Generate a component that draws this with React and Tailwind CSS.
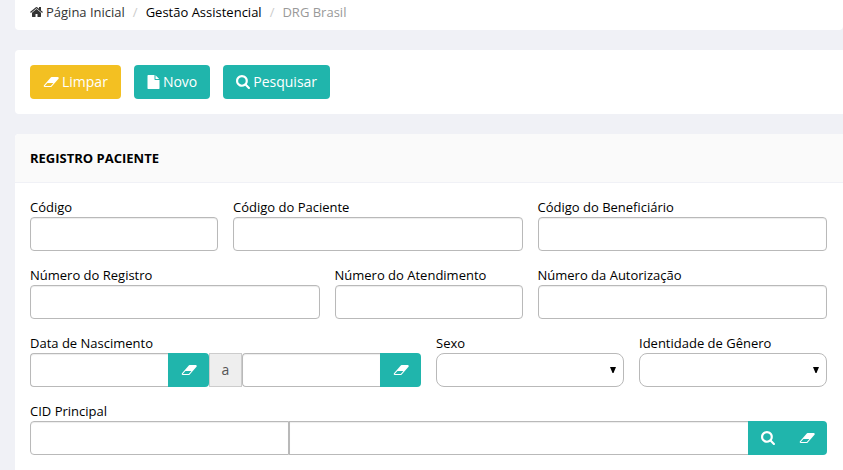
import React from 'react';
import clsx from 'clsx';

const ICONS = {
  home: {
    viewBox: '64 0 1664 1792',
    path: 'M1472 992v480q0 26-19 45t-45 19h-384v-384h-256v384h-384q-26 0-45-19t-19-45v-480q0-1 .5-3t.5-3l575-474 575 474q1 2 1 6zm223-69l-62 74q-8 9-21 11h-3q-13 0-21-7l-692-577-692 577q-12 8-24 7-13-2-21-11l-62-74q-8-10-7-23.5t11-21.5l719-599q32-26 76-26t76 26l244 204v-195q0-14 9-23t23-9h192q14 0 23 9t9 23v408l219 182q10 8 11 21.5t-7 23.5z',
  },
  eraser: {
    viewBox: '0 0 1984 1792',
    path: 'M960 1408l336-384h-768l-336 384h768zm1013-1077q15 34 9.5 71.5t-30.5 65.5l-896 1024q-38 44-96 44h-768q-38 0-69.5-20.5t-47.5-54.5q-15-34-9.5-71.5t30.5-65.5l896-1024q38-44 96-44h768q38 0 69.5 20.5t47.5 54.5z',
  },
  file: {
    viewBox: '128 0 1536 1792',
    path: 'M1152 512v-472q22 14 36 28l408 408q14 14 28 36h-472zm-128 32q0 40 28 68t68 28h544v1056q0 40-28 68t-68 28h-1344q-40 0-68-28t-28-68v-1600q0-40 28-68t68-28h800v544z',
  },
  search: {
    viewBox: '64 128 1664 1664',
    path: 'M1216 832q0-185-131.5-316.5t-316.5-131.5-316.5 131.5-131.5 316.5 131.5 316.5 316.5 131.5 316.5-131.5 131.5-316.5zm512 832q0 52-38 90t-90 38q-54 0-90-38l-343-342q-179 124-399 124-143 0-273.5-55.5t-225-150-150-225-55.5-273.5 55.5-273.5 150-225 225-150 273.5-55.5 273.5 55.5 225 150 150 225 55.5 273.5q0 220-124 399l343 343q37 37 37 90z',
  },
};

const Icon = ({ name, className }) => (
  <svg viewBox={ICONS[name].viewBox} fill="currentColor" aria-hidden="true" className={clsx('shrink-0', className)}>
    <path d={ICONS[name].path} />
  </svg>
);

const ToolbarButton = ({ icon, iconClass, color, children }) => (
  <button type="button" className={clsx('flex h-[34px] items-center gap-[3px] rounded px-[13px] text-sm text-white', color)}>
    <Icon name={icon} className={iconClass} />
    {children}
  </button>
);

const IconButton = ({ icon, label, className }) => (
  <button
    type="button"
    aria-label={label}
    className={clsx('flex h-[34px] shrink-0 items-center justify-center bg-[#20b5ac] text-white', className)}
  >
    <Icon name={icon} className={icon === 'eraser' ? 'h-[14px] w-4' : 'size-[14px]'} />
  </button>
);

const inputClass =
  'h-[34px] min-w-0 border border-[#b9b9b9] bg-white px-3 text-sm shadow-[inset_0_1px_1px_rgba(0,0,0,0.075)] outline-none';

const Field = ({ id, label, span, children }) => (
  <div className={span}>
    <label htmlFor={id} className="block h-5 text-[13px] leading-5">
      {label}
    </label>
    {children || <input id={id} type="text" className={clsx(inputClass, 'w-full rounded')} />}
  </div>
);

const SelectField = ({ id, label, span }) => (
  <Field id={id} label={label} span={span}>
    <div className="relative">
      <select
        id={id}
        className="block h-[34px] w-full appearance-none rounded-lg border border-[#b9b9b9] bg-white px-3 text-sm outline-none"
      >
        <option value=""></option>
      </select>
      <svg viewBox="0 0 6 6" className="pointer-events-none absolute top-[14px] right-2 size-[6px]" aria-hidden="true">
        <path d="M0 0h6L3.5 6h-1z" />
      </svg>
    </div>
  </Field>
);

const App = () => {
  return (
    <div className="flex min-h-screen flex-col gap-5 bg-[#f0f1f6] pl-[15px] font-['Open_Sans',sans-serif] text-black">
      <nav aria-label="breadcrumb" className="rounded-b bg-white px-[15px] pt-[2px] pb-2">
        <ol className="flex items-center text-[13px] leading-5">
          <li>
            <a href="#inicio" className="flex items-center gap-[3px] text-[#333]">
              <Icon name="home" className="h-[14px] w-[13px]" />
              Página Inicial
            </a>
          </li>
          <li className="px-2 text-[#ccc]" aria-hidden="true">/</li>
          <li>
            <a href="#gestao">Gestão Assistencial</a>
          </li>
          <li className="px-2 text-[#ccc]" aria-hidden="true">/</li>
          <li className="text-[#999]">DRG Brasil</li>
        </ol>
      </nav>

      <div className="flex gap-[13px] rounded-l bg-white p-[15px]">
        <ToolbarButton icon="eraser" iconClass="h-[14px] w-4" color="bg-[#f3c022]">Limpar</ToolbarButton>
        <ToolbarButton icon="file" iconClass="h-[14px] w-[13px]" color="bg-[#20b5ac]">Novo</ToolbarButton>
        <ToolbarButton icon="search" iconClass="size-[14px]" color="bg-[#20b5ac]">Pesquisar</ToolbarButton>
      </div>

      <form className="flex-1 rounded-tl bg-white pb-3">
        <h2 className="rounded-tl border-b border-[#f0f1f6] bg-[#fafafa] px-[15px] py-[14px] text-[13px] leading-5 font-bold">
          REGISTRO PACIENTE
        </h2>

        <div className="grid grid-cols-8 gap-x-[15px] gap-y-[14px] pt-[14px] pr-4 pl-[15px]">
          <Field id="codigo" label="Código" span="col-span-2" />
          <Field id="codigo-paciente" label="Código do Paciente" span="col-span-3" />
          <Field id="codigo-beneficiario" label="Código do Beneficiário" span="col-span-3" />

          <Field id="numero-registro" label="Número do Registro" span="col-span-3" />
          <Field id="numero-atendimento" label="Número do Atendimento" span="col-span-2" />
          <Field id="numero-autorizacao" label="Número da Autorização" span="col-span-3" />

          <Field id="nascimento-de" label="Data de Nascimento" span="col-span-4">
            <div className="flex">
              <input id="nascimento-de" type="text" className={clsx(inputClass, 'flex-1 rounded-l border-r-0')} />
              <IconButton icon="eraser" label="Limpar data inicial" className="w-[41px] rounded-r" />
              <span className="flex w-[33px] shrink-0 items-center justify-center border border-[#ccc] bg-[#eee] text-sm text-[#555]">
                a
              </span>
              <input
                type="text"
                aria-label="Data de Nascimento final"
                className={clsx(inputClass, 'flex-1 rounded-l border-r-0')}
              />
              <IconButton icon="eraser" label="Limpar data final" className="w-[41px] rounded-r" />
            </div>
          </Field>
          <SelectField id="sexo" label="Sexo" span="col-span-2" />
          <SelectField id="genero" label="Identidade de Gênero" span="col-span-2" />

          <Field id="cid" label="CID Principal" span="col-span-8">
            <div className="flex">
              <input id="cid" type="text" className={clsx(inputClass, 'w-[259px] rounded-l')} />
              <input type="text" aria-label="Descrição do CID" className={clsx(inputClass, 'flex-1 border-r-0')} />
              <IconButton icon="search" label="Pesquisar CID" className="w-[39px]" />
              <IconButton icon="eraser" label="Limpar CID" className="w-10 rounded-r" />
            </div>
          </Field>
        </div>
      </form>
    </div>
  );
};

export default App;
